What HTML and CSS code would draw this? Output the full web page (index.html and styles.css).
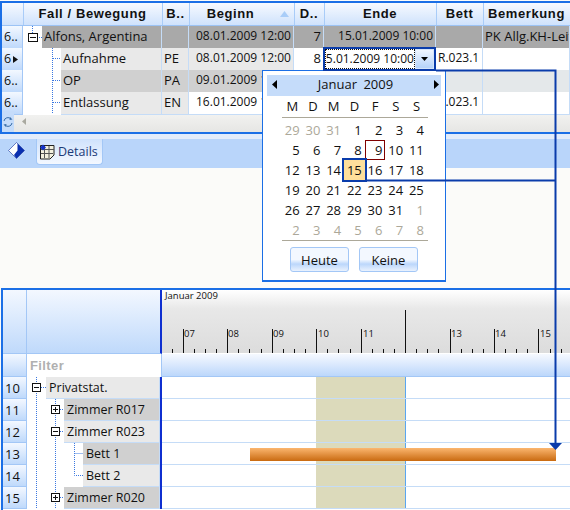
FILE: index.html
```html
<!DOCTYPE html>
<html lang="de">
<head>
<meta charset="utf-8">
<title>Details</title>
<link rel="stylesheet" href="styles.css">
</head>
<body>
<section class="top">
  <div class="row head">
    <div class="hc"></div>
    <div class="hc sep">Fall / Bewegung</div>
    <div class="hc sep">B..</div>
    <div class="hc sep sorted">Beginn<svg class="sort" width="9" height="6"><path d="M0 6L4.5 0L9 6Z" fill="#a9cdf8"/></svg></div>
    <div class="hc sep">D..</div>
    <div class="hc sep">Ende</div>
    <div class="hc sep">Bett</div>
    <div class="hc sep">Bemerkung</div>
  </div>
  <div class="row">
    <div class="rh">6..</div>
    <div class="tree"><svg class="gut g19" height="22"><path class="dot" d="M9.5 0V7M14 11.5H19"/><rect class="box" x="5.5" y="7.5" width="9" height="8"/><path class="sign" d="M7 11.5H13"/></svg><span class="lbl dark">Alfons, Argentina</span></div>
    <div class="c dark"></div>
    <div class="c dark num">08.01.2009 12:00</div>
    <div class="c dark rt">7</div>
    <div class="c dark rt date">15.01.2009 10:00</div>
    <div class="c dark"></div>
    <div class="c dark">PK Allg.KH-Leitung</div>
  </div>
  <div class="row">
    <div class="rh cur">6<svg width="5" height="7"><path d="M0 0L5 3.5L0 7Z"/></svg></div>
    <div class="tree"><svg class="gut g38" height="22"><path class="dot" d="M29.500 0V22M30 10.500H38"/></svg><span class="lbl lite">Aufnahme</span></div>
    <div class="c lite">PE</div>
    <div class="c lite num">08.01.2009 12:00</div>
    <div class="c rt">8</div>
    <div class="c edit"><span class="field"><span class="val">15.01.2009 10:00</span></span><span class="drop"><svg width="7" height="4"><path d="M0 0H7L3.500 4Z"/></svg></span></div>
    <div class="c bed">R.023.1</div>
    <div class="c"></div>
  </div>
  <div class="row">
    <div class="rh">6..</div>
    <div class="tree"><svg class="gut g38" height="22"><path class="dot" d="M29.500 0V22M30 10.500H38"/></svg><span class="lbl mid">OP</span></div>
    <div class="c mid">PA</div>
    <div class="c mid num">09.01.2009 10:00</div>
    <div class="c"></div>
    <div class="c"></div>
    <div class="c pale"></div>
    <div class="c pale"></div>
  </div>
  <div class="row last">
    <div class="rh">6..</div>
    <div class="tree"><svg class="gut g38" height="22"><path class="dot" d="M29.500 0V22M30 10.500H38"/></svg><span class="lbl lite">Entlassung</span></div>
    <div class="c lite">EN</div>
    <div class="c num">16.01.2009 10:00</div>
    <div class="c"></div>
    <div class="c"></div>
    <div class="c bed">R.023.1</div>
    <div class="c"></div>
  </div>
  <div class="scroll">
    <span class="refresh"><svg width="12" height="12" viewBox="0 0 12 12"><path d="M2 5A4 4 0 0 1 9 3M10 7A4 4 0 0 1 3 9" fill="none" stroke="#3a6ea8"/><path d="M8 1L10.500 3.500L7.500 4Z M4 11L1.500 8.500L4.500 8Z" fill="#3a6ea8"/></svg></span>
    <svg class="left" width="4" height="7"><path d="M4 0V7L0 3.500Z"/></svg>
  </div>
</section>

<nav class="tabs">
  <span class="t-ico"><svg width="17" height="17" viewBox="0 0 17 17"><path d="M8.500 0.500L16.500 8.500L8.500 16.500L0.500 8.500Z" fill="#fff"/><path d="M9.500 1.500L16.500 8.500L8.500 16.500L6 13L9.500 8.500Z" fill="#0a2fb0"/><path d="M8.500 0.500L0.500 8.500L8.500 16.500L16.500 8.500Z" fill="none" stroke="#12309a" stroke-width=".6"/></svg></span>
  <span class="tab"><svg width="16" height="16" viewBox="0 0 16 16"><path d="M1.500 1.500H15V11L11 15H1.500Z" fill="#f4f1df" stroke="#222"/><path d="M5.500 2V14M10 2V14M2 5.500H15M2 9.500H14" stroke="#555" fill="none"/><path d="M4 0.500L7 3.500L4 6.500L1 3.500Z" fill="#1433c8"/></svg>Details</span>
</nav>

<section class="gantt">
  <div class="g-head">
    <div class="g-corner"></div>
    <div class="g-blank"></div>
    <div class="ruler">
      <div class="month">Januar 2009</div>
      <svg width="408" height="63" class="ruler-svg">
        <g transform="translate(-162 -290)">
          <path class="tick" d="M172.500 349v4M194.500 349v4M205.500 349v4M216.500 349v4M238.500 349v4M249.500 349v4M261.500 349v4M283.500 349v4M294.500 349v4M305.500 349v4M327.500 349v4M338.500 349v4M350.500 349v4M372.500 349v4M383.500 349v4M394.500 349v4M416.500 349v4M427.500 349v4M438.500 349v4M461.500 349v4M472.500 349v4M483.500 349v4M505.500 349v4M516.500 349v4M527.500 349v4M550.500 349v4M561.500 349v4"/>
          <path class="tick" d="M183.500 329v24M227.500 329v24M272.500 329v24M316.500 329v24M361.500 329v24M450.500 329v24M494.500 329v24M538.500 329v24M405.500 310v43"/>
          <text x="184" y="337">07</text><text x="228" y="337">08</text><text x="273" y="337">09</text><text x="318" y="337">10</text><text x="363" y="337">11</text><text x="451" y="337">13</text><text x="495" y="337">14</text><text x="540" y="337">15</text>
        </g>
      </svg>
    </div>
  </div>
  <div class="g-filter">
    <div class="g-corner"></div>
    <div class="filter">Filter</div>
    <div class="f-band"></div>
  </div>
  <div class="g-row">
    <div class="rh">10</div>
    <div class="tree2"><svg class="gut g2" height="22"><path class="dot" d="M9.500 0V22M14 10.500H19"/><rect class="box" x="5.500" y="6.500" width="8" height="8"/><path class="sign" d="M7 10.500H12"/></svg><span class="lbl lite">Privatstat.</span></div>
    <div class="lane"><div class="off"></div></div>
  </div>
  <div class="g-row">
    <div class="rh">11</div>
    <div class="tree2"><svg class="gut g3" height="22"><path class="dot" d="M9.500 0V22M28.500 0V22M33 10.500H37"/><rect class="box" x="24.500" y="6.500" width="8" height="8"/><path class="sign" d="M26 10.500H31M28.500 8V13"/></svg><span class="lbl mid">Zimmer R017</span></div>
    <div class="lane"><div class="off"></div></div>
  </div>
  <div class="g-row">
    <div class="rh">12</div>
    <div class="tree2"><svg class="gut g3" height="22"><path class="dot" d="M9.500 0V22M28.500 0V22M33 10.500H37"/><rect class="box" x="24.500" y="6.500" width="8" height="8"/><path class="sign" d="M26 10.500H31"/></svg><span class="lbl lite">Zimmer R023</span></div>
    <div class="lane"><div class="off"></div></div>
  </div>
  <div class="g-row">
    <div class="rh">13</div>
    <div class="tree2"><svg class="gut g4" height="22"><path class="dot" d="M9.500 0V22M28.500 0V22M47.500 0V22M47.500 10.500H56"/></svg><span class="lbl mid">Bett 1</span></div>
    <div class="lane"><div class="off"></div><div class="bar"></div></div>
  </div>
  <div class="g-row">
    <div class="rh">14</div>
    <div class="tree2"><svg class="gut g4" height="22"><path class="dot" d="M9.500 0V22M28.500 0V22M47.500 0V10.500H56"/></svg><span class="lbl lite">Bett 2</span></div>
    <div class="lane"><div class="off"></div></div>
  </div>
  <div class="g-row">
    <div class="rh">15</div>
    <div class="tree2"><svg class="gut g3" height="22"><path class="dot" d="M9.500 0V22M28.500 0V22M33 10.500H37"/><rect class="box" x="24.500" y="6.500" width="8" height="8"/><path class="sign" d="M26 10.500H31M28.500 8V13"/></svg><span class="lbl mid">Zimmer R020</span></div>
    <div class="lane"><div class="off"></div></div>
  </div>
</section>

<aside class="popup">
  <div class="cal-title">
    <svg width="5" height="9"><path d="M5 0V9L0 4.500Z"/></svg>
    <span>Januar 2009</span>
    <svg width="5" height="9"><path d="M0 0V9L5 4.500Z"/></svg>
  </div>
  <div class="days dow"><span>M</span><span>D</span><span>M</span><span>D</span><span>F</span><span>S</span><span>S</span></div>
  <div class="days dates">
    <span class="out">29</span><span class="out">30</span><span class="out">31</span><span>1</span><span>2</span><span>3</span><span>4</span>
    <span>5</span><span>6</span><span>7</span><span>8</span><span class="today">9</span><span>10</span><span>11</span>
    <span>12</span><span>13</span><span>14</span><span class="sel">15</span><span>16</span><span>17</span><span>18</span>
    <span>19</span><span>20</span><span>21</span><span>22</span><span>23</span><span>24</span><span>25</span>
    <span>26</span><span>27</span><span>28</span><span>29</span><span>30</span><span>31</span><span class="out">1</span>
    <span class="out">2</span><span class="out">3</span><span class="out">4</span><span class="out">5</span><span class="out">6</span><span class="out">7</span><span class="out">8</span>
  </div>
  <div class="cal-btns"><span class="btn">Heute</span><span class="btn">Keine</span></div>
</aside>

<svg class="link" width="570" height="510">
  <path d="M436 70.500H555.500V444M365 180.500H555.500" fill="none" stroke="#0a3cab" stroke-width="2"/>
  <path d="M549 443H562L555.500 450Z" fill="#0a3cab"/>
</svg>
</body>
</html>
```
FILE: styles.css
```css
* { box-sizing: border-box; }
html, body { margin: 0; padding: 0; }
body {
  position: relative;
  width: 570px;
  height: 510px;
  overflow: hidden;
  background: #fbfbf9;
  font: 13px/22px "Open Sans", sans-serif;
  color: #111;
}
svg { display: block; flex: none; }
.dot { fill: none; stroke: #3b78e0; stroke-dasharray: 1 1; }
.box { fill: #fff; stroke: #111; }
.sign { stroke: #111; fill: none; }

/* upper grid */
.top {
  margin-top: 1px;
  height: 133px;
  border-top: 2px solid #1b6fe6;
  border-bottom: 2px solid #1b6fe6;
  border-left: 2px solid #1b6fe6;
  background: #fff;
  overflow: hidden;
}
.row {
  display: grid;
  grid-template-columns: 21px 139px 27px 105px 30px 112px 47px 87px;
  height: 22px;
}
.row.head { height: 23px; }
.row.last { height: 19px; }
.row .lbl, .row .c { line-height: 20px; }
.hc {
  font: 700 13px/22px "Liberation Sans", sans-serif;
  text-align: center;
  letter-spacing: .6px;
  background: linear-gradient(#f7faff, #cfe2fc);
  border-bottom: 1px solid #9cc3f5;
  white-space: nowrap;
  overflow: hidden;
  position: relative;
}
.sep { box-shadow: inset 1px 0 0 #a9ccf8; }
.sorted { padding-right: 22px; }
.sort { position: absolute; right: 5px; top: 8px; }
.rh {
  background: linear-gradient(#f3f8ff, #bfd9fb);
  border-right: 1px solid #a3c7f6;
  border-bottom: 1px solid #a3c7f6;
  padding-left: 2px;
  font-size: 12.500px;
  display: flex;
  align-items: center;
  gap: 2px;
}
.cur path { fill: #111; }
.tree, .tree2 { display: flex; overflow: hidden; background: #fff; }
.g19 { width: 19px; }
.g38 { width: 38px; }
.g2 { width: 19px; }
.g3 { width: 37px; }
.g4 { width: 56px; }
.lbl {
  flex: 1;
  padding-left: 2px;
  white-space: nowrap;
  border-bottom: 1px solid #c5dcf7;
  border-right: 1px solid #c5dcf7;
}
.c {
  padding: 0 2px;
  white-space: nowrap;
  overflow: hidden;
  border-bottom: 1px solid #c5dcf7;
  border-right: 1px solid #c5dcf7;
  background: #fff;
}
.num { padding-left: 7px; font-size: 12px; }
.date, .bed { font-size: 12px; }
.rt { text-align: right; }
.dark { background: #a9a9a9; }
.lite { background: #e9e9e9; }
.mid { background: #d0d0d0; }
.pale { background: #e4e8ea; }
.edit {
  position: relative;
  display: flex;
  padding: 0;
  margin: -1px 0 -1px -1px;
  height: 24px;
  width: 113px;
  border: 2px solid #0a3cab;
  overflow: hidden;
  z-index: 1;
}
.field { flex: 1; min-width: 0; overflow: hidden; border: 1px dotted #111; }
.val { display: block; margin-left: -7px; font-size: 12px; line-height: 18px; white-space: nowrap; }
.drop {
  width: 19px;
  flex: none;
  background: linear-gradient(#f0f6ff, #b5d3fa);
  border: 1px solid #d4e4fa;
  display: flex;
  align-items: center;
  justify-content: center;
}
.scroll {
  height: 21px;
  display: flex;
  align-items: center;
  background: linear-gradient(#f4f4f2, #e6e6e4);
}
.refresh {
  width: 12px;
  height: 100%;
  background: #c5dcfa;
  display: flex;
  align-items: center;
  justify-content: center;
}
.left { margin-left: 8px; }
.left path { fill: #a9a9a0; }

/* tabs */
.tabs {
  height: 34px;
  padding: 0 0 0 8px;
  background: #b9d5fa;
  border-top: 5px solid #e2ecfb;
  display: flex;
  align-items: flex-start;
  gap: 11px;
}
.t-ico { margin-top: 3px; }
.tab {
  height: 26px;
  width: 67px;
  padding: 1px 0 0 2px;
  display: flex;
  align-items: center;
  gap: 3px;
  font-size: 12.500px;
  color: #1c3a78;
  background: linear-gradient(#cfe2fc, #f4f8ff);
  border: 1px solid #a3c7f6;
  border-top: 0;
  border-radius: 0 0 4px 4px;
}

/* gantt */
.gantt {
  margin: 120px 0 0 1px;
  border-top: 2px solid #1b6fe6;
  border-left: 2px solid #1b6fe6;
  height: 222px;
  background: #fff;
}
.g-head { display: flex; height: 64px; }
.g-corner {
  width: 24px;
  flex: none;
  background: linear-gradient(#f3f8ff, #bfd9fb);
  border-right: 1px solid #a3c7f6;
  border-bottom: 1px solid #a3c7f6;
}
.g-blank {
  width: 135px;
  flex: none;
  background: linear-gradient(#f3f8ff, #bfd9fb);
  border-right: 2px solid #0f2fd0;
  border-bottom: 1px solid #a3c7f6;
}
.ruler {
  position: relative;
  flex: 1;
  height: 63px;
  background: linear-gradient(#fff, #e8e8e8 30%, #dcdcdc);
}
.month { position: absolute; left: 3px; top: 0; font: 9.500px/12px "Open Sans", sans-serif; }
.ruler-svg text { font: 9.500px "Open Sans", sans-serif; fill: #111; }
.tick { stroke: #111; fill: none; }
.g-filter { display: flex; height: 23px; }
.filter {
  width: 135px;
  flex: none;
  padding-left: 3px;
  font: 700 13px/23px "Liberation Sans", sans-serif;
  letter-spacing: .4px;
  color: #b0b0b0;
  background: #fff;
  border-right: 1px solid #a3c7f6;
}
.f-band {
  flex: 1;
  background: linear-gradient(#f6f9ff, #bcd7fb);
  border-bottom: 1px solid #a3c7f6;
}
.g-row { display: flex; height: 22px; }
.g-row .rh { width: 24px; flex: none; font-size: 13px; }
.tree2 { width: 135px; flex: none; border-right: 2px solid #0f2fd0; }
.tree2 .lbl { padding-left: 3px; font-size: 12.500px; line-height: 21px; }
.lane {
  position: relative;
  flex: 1;
  border-bottom: 1px solid #c5dcf7;
}
.off {
  position: absolute;
  left: 154px;
  top: 0;
  width: 90px;
  bottom: 0;
  background: #dcdabb;
  border-right: 1px solid #5aa6f0;
}
.bar {
  position: absolute;
  left: 88px;
  width: 306px;
  top: 5px;
  height: 13px;
  background: linear-gradient(#fbb66f, #c96a10);
}

/* popup */
.popup {
  position: absolute;
  left: 262px;
  top: 70px;
  width: 184px;
  height: 212px;
  padding: 4px;
  background: #fff;
  border: 1px solid #1b6fe6;
  border-bottom-width: 2px;
}
.cal-title {
  height: 21px;
  background: #c5dcfa;
  display: flex;
  align-items: center;
  justify-content: space-between;
  padding: 0 2px 2px 5px;
  line-height: 21px;
  word-spacing: 3px;
}
.days {
  display: grid;
  grid-template-columns: repeat(7, 20.700px);
  margin-left: 15px;
  width: 146px;
}
.dow {
  height: 22px;
  border-bottom: 1px solid #aca899;
  text-align: center;
  line-height: 20px;
}
.dates {
  grid-auto-rows: 20px;
  margin: 0 0 0 15px;
  padding: 2px 0 0;
  border-bottom: 1px solid #aca899;
  height: 123px;
  width: 146px;
}
.dates span { text-align: right; padding-right: 3px; line-height: 20px; }
.out { color: #aca899; }
.today { box-shadow: inset 0 0 0 1px #800000; }
.sel { background: #fedf9b; box-shadow: 0 0 0 2px #0a3cab; }
.cal-btns { display: flex; justify-content: center; gap: 10px; margin-top: 6px; }
.btn {
  width: 59px;
  height: 25px;
  text-align: center;
  line-height: 25px;
  border: 1px solid #a3c7f6;
  border-radius: 3px;
  background: linear-gradient(#f3f8ff 50%, #bcd7fb 70%, #eaf2fe);
}
.link { position: absolute; left: 0; top: 0; pointer-events: none; }
```
